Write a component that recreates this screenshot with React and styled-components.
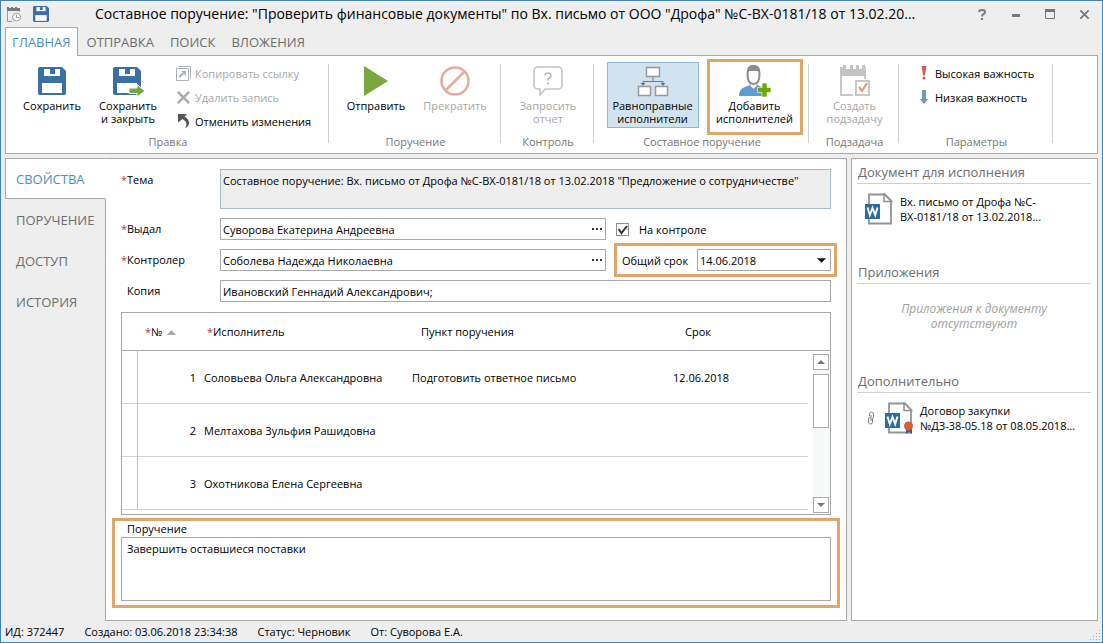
import { useState } from "react";
import styled, { createGlobalStyle, css } from "styled-components";

const GlobalStyle = createGlobalStyle`
  * {
    box-sizing: border-box;
  }

  body {
    margin: 0;
    font-family: "Open Sans", "Noto Sans", sans-serif;
    font-size: 11px;
    color: #000;
  }

  button,
  input,
  select,
  textarea {
    font: inherit;
    color: inherit;
    margin: 0;
    padding: 0;
    border: none;
    border-radius: 0;
    background: none;
    outline: none;
  }

  svg {
    display: block;
    flex-shrink: 0;
  }
`;

const Window = styled.div`
  min-height: 100vh;
  display: flex;
  flex-direction: column;
  border: 1px solid #4585b5;
  background-color: #eee;
`;

const TitleBar = styled.header`
  height: 26px;
  padding: 0 10px 0 5px;
  display: flex;
  align-items: center;
`;

const QuickIcons = styled.div`
  width: 89px;
  display: flex;
  gap: 11px;
`;

const Title = styled.h1`
  flex: 1;
  min-width: 0;
  margin: 0;
  font-size: 14px;
  line-height: 20px;
  font-weight: 400;
  white-space: nowrap;
`;

const WindowButtons = styled.div`
  display: flex;
  gap: 18px;
`;

const WindowButton = styled.button`
  width: 16px;
  height: 16px;
  display: flex;
  align-items: center;
  justify-content: center;
`;

const Tabs = styled.nav`
  height: 29px;
  padding-left: 4px;
  display: flex;
  position: relative;
  z-index: 1;
  margin-bottom: -1px;
`;

const Tab = styled.button`
  padding: 0 7px;
  font-size: 13px;
  line-height: 28px;
  color: #6d6d6d;
  border: 1px solid transparent;
  border-bottom: none;

  ${(props) =>
    props.$active &&
    css`
      padding: 0 6px;
      margin-right: 1px;
      color: #4a8fc0;
      background-color: #fff;
      border-color: #a9a9ab;
    `}
`;

const Ribbon = styled.section`
  margin: 0 4px 4px;
  height: 99px;
  display: flex;
  background-color: #fff;
  border: 1px solid #a9a9ab;
`;

const Group = styled.div`
  width: ${(props) => props.$width}px;
  padding: 6px 0 0 2px;
  display: flex;
  flex-direction: column;
  flex-shrink: 0;
`;

const GroupContent = styled.div`
  height: 72px;
  display: flex;
  align-items: flex-start;
  justify-content: ${(props) => props.$justify || "center"};
  gap: ${(props) => props.$gap || 0}px;
  padding-left: ${(props) => props.$indent || 0}px;
`;

const GroupLabel = styled.div`
  line-height: 16px;
  text-align: center;
  color: #777;
`;

const Divider = styled.div`
  width: 1px;
  height: 79px;
  margin-top: 8px;
  flex-shrink: 0;
  background-color: #d0d0d0;
`;

const BigButton = styled.button`
  width: ${(props) => props.$width || 76}px;
  height: 66px;
  padding-top: 2px;
  display: flex;
  flex-direction: column;
  align-items: center;
  gap: 2px;
  line-height: 13px;
  text-align: center;
  white-space: pre-line;
  color: ${(props) => (props.disabled ? "#a6a6a6" : "#000")};
  border: 1px solid ${(props) => (props.$pressed ? "#8db9d6" : "transparent")};
  background-color: ${(props) => (props.$pressed ? "#d0e3ef" : "transparent")};
`;

const IconSlot = styled.span`
  height: 32px;
  display: flex;
  align-items: center;
`;

const SmallButtons = styled.div`
  margin-top: -1px;
  margin-left: ${(props) => props.$offset || 0}px;
  display: flex;
  flex-direction: column;
`;

const SmallButton = styled.button`
  height: 24px;
  display: flex;
  align-items: center;
  gap: 4px;
  white-space: nowrap;
  color: ${(props) => (props.disabled ? "#a6a6a6" : "#000")};
`;

const RibbonCallout = styled.div`
  height: 70px;
  outline: 3px solid #dea66b;
`;

const Body = styled.div`
  flex: 1;
  margin: 0 4px;
  display: flex;
`;

const SideTabs = styled.nav`
  width: 101px;
  margin-right: -1px;
  display: flex;
  flex-direction: column;
  flex-shrink: 0;
  position: relative;
  z-index: 1;
`;

const SideTab = styled.button`
  height: 41px;
  margin-right: 1px;
  padding-left: 10px;
  text-align: left;
  font-size: 13px;
  color: #6d6d6d;
  border: 1px solid transparent;

  ${(props) =>
    props.$active &&
    css`
      margin-right: 0;
      color: #4a8fc0;
      background-color: #fff;
      border-color: #a9a9ab;
      border-right-color: #fff;
    `}
`;

const Main = styled.main`
  flex: 1;
  min-width: 0;
  padding: 10px 15px 12px;
  display: flex;
  flex-direction: column;
  background-color: #fff;
  border: 1px solid #a9a9ab;
`;

const Form = styled.div`
  display: grid;
  grid-template-columns: 99px 1fr 225px;
  row-gap: 9px;
  margin-bottom: 10px;
`;

const Label = styled.label`
  padding-left: ${(props) => (props.$required ? 0 : 6)}px;
  line-height: 22px;

  &::before {
    content: "${(props) => (props.$required ? "*" : "")}";
    display: inline-block;
    width: ${(props) => (props.$required ? 6 : 0)}px;
    color: #b5382f;
  }
`;

const Subject = styled.textarea`
  grid-column: 2 / 4;
  height: 40px;
  padding: 2px;
  line-height: 18px;
  resize: none;
  background-color: #eee;
  border: 1px solid #a3bccb;
`;

const Field = styled.div`
  grid-column: ${(props) => (props.$wide ? "2 / 4" : "auto")};
  height: 22px;
  display: flex;
  border: 1px solid #a9a9ab;
`;

const TextInput = styled.input`
  flex: 1;
  min-width: 0;
  padding-left: 2px;
`;

const MoreButton = styled.button`
  width: 17px;
  display: flex;
  align-items: center;
  justify-content: center;
`;

const CheckRow = styled.label`
  height: 22px;
  padding-left: 10px;
  display: flex;
  align-items: center;
  gap: 10px;
`;

const CheckBox = styled.span`
  width: 13px;
  height: 13px;
  display: grid;

  input,
  svg {
    grid-area: 1 / 1;
  }

  input {
    appearance: none;
    border: 1px solid #8d8d8d;
  }

  svg {
    pointer-events: none;
  }
`;

const DateCallout = styled.div`
  height: 22px;
  margin-left: 14px;
  padding-left: 2px;
  display: flex;
  align-items: center;
  justify-content: space-between;
  outline: 3px solid #dea66b;
  outline-offset: 3px;
`;

const SelectBox = styled.div`
  width: 134px;
  height: 22px;
  display: grid;
  align-items: center;
  border: 1px solid #a9a9ab;

  select,
  svg {
    grid-area: 1 / 1;
  }

  select {
    appearance: none;
    height: 20px;
    padding-left: 2px;
  }

  svg {
    justify-self: end;
    margin-right: 4px;
    pointer-events: none;
  }
`;

const TableFrame = styled.div`
  display: flex;
  align-items: stretch;
  border: 1px solid #a9a9ab;
`;

const TableView = styled.div`
  flex: 1;
  min-width: 0;
  padding-bottom: 4px;
`;

const Table = styled.table`
  width: 100%;
  table-layout: fixed;
  border-collapse: separate;
  border-spacing: 0;

  th {
    height: 38px;
    padding: 0 0 0 9px;
    font-weight: 400;
    text-align: left;
    border-bottom: 1px solid #a9a9ab;
  }

  th:nth-child(2) {
    padding-left: 7px;
  }

  th:nth-child(3) {
    padding-left: 3px;
  }

  th:last-child {
    padding: 0 6px 0 0;
    text-align: center;
  }

  td {
    height: 53px;
    padding: 0;
    border-bottom: 1px solid #d0d0d0;
  }

  td:first-child {
    border-right: 1px solid #c4c4c4;
  }

  td:nth-child(2) {
    padding-right: 8px;
    text-align: right;
  }

  td:last-child {
    text-align: center;
  }
`;

const Col = styled.col`
  width: ${(props) => (props.$width ? `${props.$width}px` : "auto")};
`;

const Required = styled.span`
  display: inline-block;
  width: 6px;
  color: #b5382f;
`;

const SortMark = styled.svg`
  && {
    display: inline-block;
    margin-left: 5px;
  }
`;

const ScrollColumn = styled.div`
  width: 22px;
  display: flex;
  flex-direction: column;

  &::before {
    content: "";
    height: 37px;
    border-bottom: 1px solid #a9a9ab;
  }
`;

const ScrollTrack = styled.div`
  flex: 1;
  margin: 3px 1px 1px 5px;
  display: flex;
  flex-direction: column;
  background-color: #f7f9f9;
`;

const ScrollButton = styled.button`
  height: 16px;
  display: flex;
  align-items: center;
  justify-content: center;
  background-color: #fff;
  border: 1px solid #a9a9ab;
`;

const ScrollThumb = styled.div`
  height: 54px;
  margin: 4px 0 auto;
  background-color: #fff;
  border: 1px solid #a9a9ab;
`;

const Assignment = styled.div`
  flex: 1;
  margin: 3px -9px 0;
  padding: 0 6px 4px;
  display: flex;
  flex-direction: column;
  border: 3px solid #dea66b;

  label {
    padding-left: 6px;
    line-height: 16px;
  }

  textarea {
    flex: 1;
    min-height: 64px;
    padding: 2px 5px;
    line-height: 18px;
    resize: none;
    border: 1px solid #a9a9ab;
  }
`;

const Aside = styled.aside`
  width: 247px;
  margin-left: 4px;
  padding: 0 6px 0 5px;
  flex-shrink: 0;
  background-color: #fff;
  border: 1px solid #a9a9ab;
`;

const AsideSection = styled.section`
  min-height: ${(props) => props.$height || 0}px;
`;

const AsideTitle = styled.h2`
  height: 25px;
  margin: 0;
  padding-left: 1px;
  font-size: 13px;
  font-weight: 400;
  line-height: 26px;
  color: #6d6d6d;
  border-bottom: 1px solid #d0d0d0;
`;

const Document = styled.a`
  margin-top: 9px;
  padding-left: 8px;
  display: flex;
  align-items: center;
  gap: 7px;
  line-height: 15px;
  white-space: pre-line;
  color: inherit;
  text-decoration: none;
`;

const Empty = styled.p`
  margin: 17px 0 0;
  font-size: 12px;
  line-height: 15px;
  text-align: center;
  font-style: italic;
  white-space: pre-line;
  color: #a0a0a0;
`;

const StatusBar = styled.footer`
  height: 21px;
  padding: 0 1px 0 4px;
  display: flex;
  align-items: center;
  gap: 20px;

  svg {
    margin: 6px 0 0 auto;
  }
`;

const CalendarClockIcon = () => (
  <svg width="16" height="17" viewBox="0 0 16 17" fill="none">
    <path d="M6 15.500H1.500V2M13.500 3v3" stroke="#999" />
    <path d="M1 1h2v1h2V1h2v1h2V1h2v1h3v3H1z" fill="#777" />
    <circle cx="10.500" cy="11" r="4" stroke="#a59a8c" fill="#fff" />
    <path d="M10.500 8.500V11.500h2.500" stroke="#a59a8c" />
  </svg>
);

const FloppyIcon = ({ size = 28, arrow }) => (
  <svg width={arrow ? 34 : size} height={arrow ? 31 : size} viewBox={arrow ? "-2 -1 34 31" : "0 0 28 28"}>
    <path d="M2 0h22l4 4v22q0 2-2 2H2q-2 0-2-2V2q0-2 2-2z" fill="#3a70a3" />
    <path d="M6 2h16v7H6z" fill="#fff" />
    <path d="M12 2h5v5h-5z" fill="#3a70a3" />
    <path d="M4 16h20v10H4z" fill="#fff" />
    {arrow && <path d="M16 21h8v-3.500l8 6.500-8 6v-3.500h-8z" fill="#78a83b" stroke="#fff" />}
  </svg>
);

const CopyLinkIcon = () => (
  <svg width="15" height="15" viewBox="0 0 15 15" fill="none" stroke="#b0b0b0">
    <path d="M2.500 .5h12v12M.5 2.500h12v12H.5z" />
    <path d="M4 11.500q0-3.500 3.500-3.500" stroke="#9fb4c4" strokeWidth="2" />
    <path d="M5 5h5v5z" fill="#9fb4c4" stroke="none" />
  </svg>
);

const CrossIcon = ({ color = "#aaa", size = 12 }) => (
  <svg width={size} height={size} viewBox="0 0 12 12">
    <path d="M1.500 1.500l9 9M10.500 1.500l-9 9" stroke={color} strokeWidth="2" />
  </svg>
);

const UndoIcon = () => (
  <svg width="15" height="16" viewBox="0 0 15 16">
    <path d="M2 1h9L8.500 3.500q5 3 4.500 7-.5 3-4 4.500 2.500-4 .5-6.500-1.200-1.500-3-2.500L2 9.500z" fill="#555" />
  </svg>
);

const PlayIcon = () => (
  <svg width="26" height="30" viewBox="0 0 26 30">
    <path d="M1 0l24 15L1 30z" fill="#78a83b" />
  </svg>
);

const StopIcon = () => (
  <svg width="30" height="30" viewBox="0 0 30 30" fill="none" stroke="#e6ab9f" strokeWidth="2.500">
    <circle cx="15" cy="15" r="13.500" />
    <path d="M24.500 5.500l-19 19" />
  </svg>
);

const QuestionIcon = () => (
  <svg width="30" height="30" viewBox="0 0 30 30">
    <path
      d="M5 1h20q4 0 4 4v14q0 4-4 4H12l-5 6v-6H5q-4 0-4-4V5q0-4 4-4z"
      fill="none"
      stroke="#c4c4c4"
      strokeWidth="1.500"
    />
    <path
      d="M12 9.500q.2-2.500 3-2.500t3 2.500q0 1.500-1.800 2.500-1.200.8-1.200 2.500M15 16.500v2"
      fill="none"
      stroke="#b4b4b4"
      strokeWidth="1.600"
    />
  </svg>
);

const TreeIcon = () => (
  <svg width="32" height="31" viewBox="0 0 32 31" fill="none">
    <path d="M16 11v5M6 18v-2.500h20V18" stroke="#5d7b90" />
    <path d="M3.500 17h5L6 20zM23.500 17h5L26 20z" fill="#5d7b90" />
    <g fill="#fff" stroke="#999" strokeWidth="1.500">
      <path d="M9.500 1.500h13v9h-13zM1.500 20.500h12v9h-12zM18.500 20.500h12v9h-12z" />
    </g>
  </svg>
);

const AddPersonIcon = () => (
  <svg width="34" height="32" viewBox="0 0 34 32">
    <path d="M1 31q0-7 6-9l5-2 4 3 4-3 5 3v8z" fill="#5f9dd0" />
    <path d="M12 17h7v4l-3.500 3-3.500-3z" fill="#fff" stroke="#999" />
    <path d="M9.500 9q0-8 6-8t6 8q0 10-6 10t-6-10z" fill="#fff" stroke="#8c8c8c" strokeWidth="2" />
    <path d="M9 9q-1-9 6.500-9T22 9l-2-3h-9z" fill="#8c8c8c" />
    <path d="M24 18h5v4.500h4v5h-4V32h-5v-4.500h-4.500v-5H24z" fill="#6fa800" stroke="#fff" strokeWidth=".6" />
  </svg>
);

const SubtaskIcon = () => (
  <svg width="32" height="32" viewBox="0 0 32 32" fill="none">
    <path d="M14 30H2V11M26 11v3" stroke="#c8c8c8" strokeWidth="2" />
    <path d="M1 2h3V0h3v4h4V0h3v4h3V0h3v4h3V0h3v2h1v9H1z" fill="#c4c4c4" />
    <path d="M17 16h13v14H17z" stroke="#c8c8c8" strokeWidth="2" fill="#fff" />
    <path d="M20 22l3 4 5-8" stroke="#e39a88" strokeWidth="2.200" />
  </svg>
);

const HighIcon = () => (
  <svg width="13" height="14" viewBox="-2 0 13 14" fill="#d0614a">
    <path d="M1.500 0h5L5 9.500H3z" />
    <circle cx="4" cy="12" r="1.600" />
  </svg>
);

const LowIcon = () => (
  <svg width="13" height="14" viewBox="-2 0 13 14">
    <path d="M2 0h4v9h2l-4 5-4-5h2z" fill="#6b9cc0" />
  </svg>
);

const DotsIcon = () => (
  <svg width="12" height="2" viewBox="0 0 12 2" fill="#333">
    <path d="M1 0h2v2H1zM5 0h2v2H5zM9 0h2v2H9z" />
  </svg>
);

const Triangle = ({ width, height, color = "#777", down }) => (
  <svg width={width} height={height} viewBox="0 0 10 5">
    <path d={down ? "M0 0h10L5 5z" : "M0 5h10L5 0z"} fill={color} />
  </svg>
);

const WordIcon = ({ seal }) => (
  <svg width="28" height="32" viewBox="0 0 28 32">
    <path d="M4 11V1.500h16l6 6V30.500H4V26" fill="#fff" stroke="#8f9499" strokeWidth="1.800" />
    <path d="M19 1v7.500h7.500z" fill="#fff" stroke="#8f9499" strokeWidth="1.500" />
    <path d="M0 11h15v15H0z" fill="#2d6ca2" />
    <path
      d="M2.500 14.500l2.300 7.500 2.700-7 2.700 7 2.300-7.500"
      fill="none"
      stroke="#fff"
      strokeWidth="1.900"
    />
    {seal && (
      <>
        <path d="M21 26h6v6l-3-2-3 2z" fill="#3f5c86" />
        <circle cx="23.500" cy="24" r="4.500" fill="#dd5a2b" />
      </>
    )}
  </svg>
);

const ClipIcon = () => (
  <svg width="13" height="14" viewBox="-2 0 13 14" fill="none" stroke="#888">
    <path d="M2.500 5V3q0-2 2-2t2 2v3q0 2-2 2M5.500 8v3q0 2-2 2t-2-2V8q0-2 2-2M4 4v6" />
  </svg>
);

const GripIcon = () => (
  <svg width="12" height="12" viewBox="0 0 12 12" fill="#aab">
    {[0, 3, 6, 9].map((x) =>
      [0, 3, 6, 9]
        .filter((y) => x + y >= 9)
        .map((y) => <rect key={`${x}-${y}`} x={x + 1} y={y + 1} width="1" height="1" />)
    )}
  </svg>
);

const tabs = ["ГЛАВНАЯ", "ОТПРАВКА", "ПОИСК", "ВЛОЖЕНИЯ"];
const sections = ["СВОЙСТВА", "ПОРУЧЕНИЕ", "ДОСТУП", "ИСТОРИЯ"];

const performers = [
  { id: 1, name: "Соловьева Ольга Александровна", item: "Подготовить ответное письмо", date: "12.06.2018" },
  { id: 2, name: "Мелтахова Зульфия Рашидовна", item: "", date: "" },
  { id: 3, name: "Охотникова Елена Сергеевна", item: "", date: "" },
];

const RibbonButton = ({ icon, children, ...rest }) => (
  <BigButton {...rest}>
    <IconSlot>{icon}</IconSlot>
    {children}
  </BigButton>
);

const RibbonBar = () => (
  <Ribbon>
    <Group $width={322}>
      <GroupContent $justify="flex-start" $indent={6}>
        <RibbonButton icon={<FloppyIcon />}>Сохранить</RibbonButton>
        <RibbonButton icon={<FloppyIcon arrow />}>{"Сохранить\nи закрыть"}</RibbonButton>
        <SmallButtons $offset={10}>
          <SmallButton disabled>
            <CopyLinkIcon />
            Копировать ссылку
          </SmallButton>
          <SmallButton disabled>
            <CrossIcon size={15} />
            Удалить запись
          </SmallButton>
          <SmallButton>
            <UndoIcon />
            Отменить изменения
          </SmallButton>
        </SmallButtons>
      </GroupContent>
      <GroupLabel>Правка</GroupLabel>
    </Group>
    <Divider />
    <Group $width={171}>
      <GroupContent>
        <RibbonButton $width={79} icon={<PlayIcon />}>
          Отправить
        </RibbonButton>
        <RibbonButton $width={79} icon={<StopIcon />} disabled>
          Прекратить
        </RibbonButton>
      </GroupContent>
      <GroupLabel>Поручение</GroupLabel>
    </Group>
    <Divider />
    <Group $width={92}>
      <GroupContent>
        <RibbonButton icon={<QuestionIcon />} disabled>
          {"Запросить\nотчет"}
        </RibbonButton>
      </GroupContent>
      <GroupLabel>Контроль</GroupLabel>
    </Group>
    <Divider />
    <Group $width={214}>
      <GroupContent $gap={11} $indent={2}>
        <RibbonButton $width={92} $pressed icon={<TreeIcon />}>
          {"Равноправные\nисполнители"}
        </RibbonButton>
        <RibbonCallout>
          <RibbonButton $width={90} icon={<AddPersonIcon />}>
            {"Добавить\nисполнителей"}
          </RibbonButton>
        </RibbonCallout>
      </GroupContent>
      <GroupLabel>Составное поручение</GroupLabel>
    </Group>
    <Divider />
    <Group $width={89}>
      <GroupContent>
        <RibbonButton icon={<SubtaskIcon />} disabled>
          {"Создать\nподзадачу"}
        </RibbonButton>
      </GroupContent>
      <GroupLabel>Подзадача</GroupLabel>
    </Group>
    <Divider />
    <Group $width={153}>
      <GroupContent $justify="flex-start" $indent={17}>
        <SmallButtons>
          <SmallButton>
            <HighIcon />
            Высокая важность
          </SmallButton>
          <SmallButton>
            <LowIcon />
            Низкая важность
          </SmallButton>
        </SmallButtons>
      </GroupContent>
      <GroupLabel>Параметры</GroupLabel>
    </Group>
    <Divider />
  </Ribbon>
);

const PersonField = ({ id, value }) => (
  <Field>
    <TextInput id={id} defaultValue={value} />
    <MoreButton aria-label="Выбрать">
      <DotsIcon />
    </MoreButton>
  </Field>
);

const PropertiesForm = () => {
  const [control, setControl] = useState(true);

  return (
    <Form>
      <Label htmlFor="subject" $required>
        Тема
      </Label>
      <Subject
        id="subject"
        readOnly
        value={'Составное поручение: Вх. письмо от Дрофа №С-ВХ-0181/18 от 13.02.2018 "Предложение о сотрудничестве"'}
      />
      <Label htmlFor="author" $required>
        Выдал
      </Label>
      <PersonField id="author" value="Суворова Екатерина Андреевна" />
      <CheckRow>
        <CheckBox>
          <input type="checkbox" checked={control} onChange={(e) => setControl(e.target.checked)} />
          {control && (
            <svg width="13" height="13" viewBox="0 0 13 13">
              <path d="M2.500 6l3 4L11 3" fill="none" stroke="#333" strokeWidth="2" />
            </svg>
          )}
        </CheckBox>
        На контроле
      </CheckRow>
      <Label htmlFor="controller" $required>
        Контролер
      </Label>
      <PersonField id="controller" value="Соболева Надежда Николаевна" />
      <DateCallout>
        <label htmlFor="term">Общий срок</label>
        <SelectBox>
          <select id="term">
            <option>14.06.2018</option>
          </select>
          <Triangle width={9} height={5} color="#111" down />
        </SelectBox>
      </DateCallout>
      <Label htmlFor="copy">Копия</Label>
      <Field $wide>
        <TextInput id="copy" defaultValue="Ивановский Геннадий Александрович;" />
      </Field>
    </Form>
  );
};

const PerformersTable = () => (
  <TableFrame>
    <TableView>
      <Table>
        <colgroup>
          <Col $width={16} />
          <Col $width={66} />
          <Col $width={208} />
          <Col />
          <Col $width={214} />
        </colgroup>
        <thead>
          <tr>
            <th />
            <th>
              <Required>*</Required>№
              <SortMark width="9" height="6" viewBox="0 0 9 6">
                <path d="M0 5h9L4.500 0z" fill="#aaa" />
              </SortMark>
            </th>
            <th>
              <Required>*</Required>Исполнитель
            </th>
            <th>Пункт поручения</th>
            <th>Срок</th>
          </tr>
        </thead>
        <tbody>
          {performers.map((row) => (
            <tr key={row.id}>
              <td />
              <td>{row.id}</td>
              <td>{row.name}</td>
              <td>{row.item}</td>
              <td>{row.date}</td>
            </tr>
          ))}
        </tbody>
      </Table>
    </TableView>
    <ScrollColumn>
      <ScrollTrack>
        <ScrollButton aria-label="Вверх">
          <Triangle width={8} height={4} />
        </ScrollButton>
        <ScrollThumb />
        <ScrollButton aria-label="Вниз">
          <Triangle width={8} height={4} down />
        </ScrollButton>
      </ScrollTrack>
    </ScrollColumn>
  </TableFrame>
);

const DocumentsPanel = () => (
  <Aside>
    <AsideSection $height={100}>
      <AsideTitle>Документ для исполнения</AsideTitle>
      <Document href="#document">
        <WordIcon />
        {"Вх. письмо от Дрофа №С-\nВХ-0181/18 от 13.02.2018..."}
      </Document>
    </AsideSection>
    <AsideSection $height={109}>
      <AsideTitle>Приложения</AsideTitle>
      <Empty>{"Приложения к документу\nотсутствуют"}</Empty>
    </AsideSection>
    <AsideSection>
      <AsideTitle>Дополнительно</AsideTitle>
      <Document href="#contract">
        <ClipIcon />
        <WordIcon seal />
        {"Договор закупки\n№ДЗ-38-05.18 от 08.05.2018..."}
      </Document>
    </AsideSection>
  </Aside>
);

const App = () => {
  const [tab, setTab] = useState(tabs[0]);
  const [section, setSection] = useState(sections[0]);

  return (
    <>
      <GlobalStyle />
      <Window>
        <TitleBar>
          <QuickIcons>
            <CalendarClockIcon />
            <FloppyIcon size={16} />
          </QuickIcons>
          <Title>
            Составное поручение: "Проверить финансовые документы" по Вх. письмо от ООО "Дрофа" №С-ВХ-0181/18 от
            13.02.20...
          </Title>
          <WindowButtons>
            <WindowButton aria-label="Справка">
              <svg width="8" height="11" viewBox="0 0 8 11" fill="none" stroke="#777" strokeWidth="2">
                <path d="M1 3q0-2 3-2t3 2q0 1.500-1.500 2.200Q4 6 4 7.500M4 9v2" />
              </svg>
            </WindowButton>
            <WindowButton aria-label="Свернуть">
              <svg width="8" height="8" viewBox="0 0 8 8">
                <path d="M0 4h8v3H0z" fill="#777" />
              </svg>
            </WindowButton>
            <WindowButton aria-label="Развернуть">
              <svg width="10" height="10" viewBox="0 0 10 10">
                <path d="M.5 1v8.500h9V1" fill="none" stroke="#777" />
                <path d="M0 0h10v3H0z" fill="#777" />
              </svg>
            </WindowButton>
            <WindowButton aria-label="Закрыть">
              <CrossIcon color="#777" size={11} />
            </WindowButton>
          </WindowButtons>
        </TitleBar>
        <Tabs>
          {tabs.map((name) => (
            <Tab key={name} $active={name === tab} onClick={() => setTab(name)}>
              {name}
            </Tab>
          ))}
        </Tabs>
        <RibbonBar />
        <Body>
          <SideTabs>
            {sections.map((name) => (
              <SideTab key={name} $active={name === section} onClick={() => setSection(name)}>
                {name}
              </SideTab>
            ))}
          </SideTabs>
          <Main>
            <PropertiesForm />
            <PerformersTable />
            <Assignment>
              <label htmlFor="assignment">Поручение</label>
              <textarea id="assignment" defaultValue="Завершить оставшиеся поставки" />
            </Assignment>
          </Main>
          <DocumentsPanel />
        </Body>
        <StatusBar>
          <span>ИД: 372447</span>
          <span>Создано: 03.06.2018 23:34:38</span>
          <span>Статус: Черновик</span>
          <span>От: Суворова Е.А.</span>
          <GripIcon />
        </StatusBar>
      </Window>
    </>
  );
};

export default App;
